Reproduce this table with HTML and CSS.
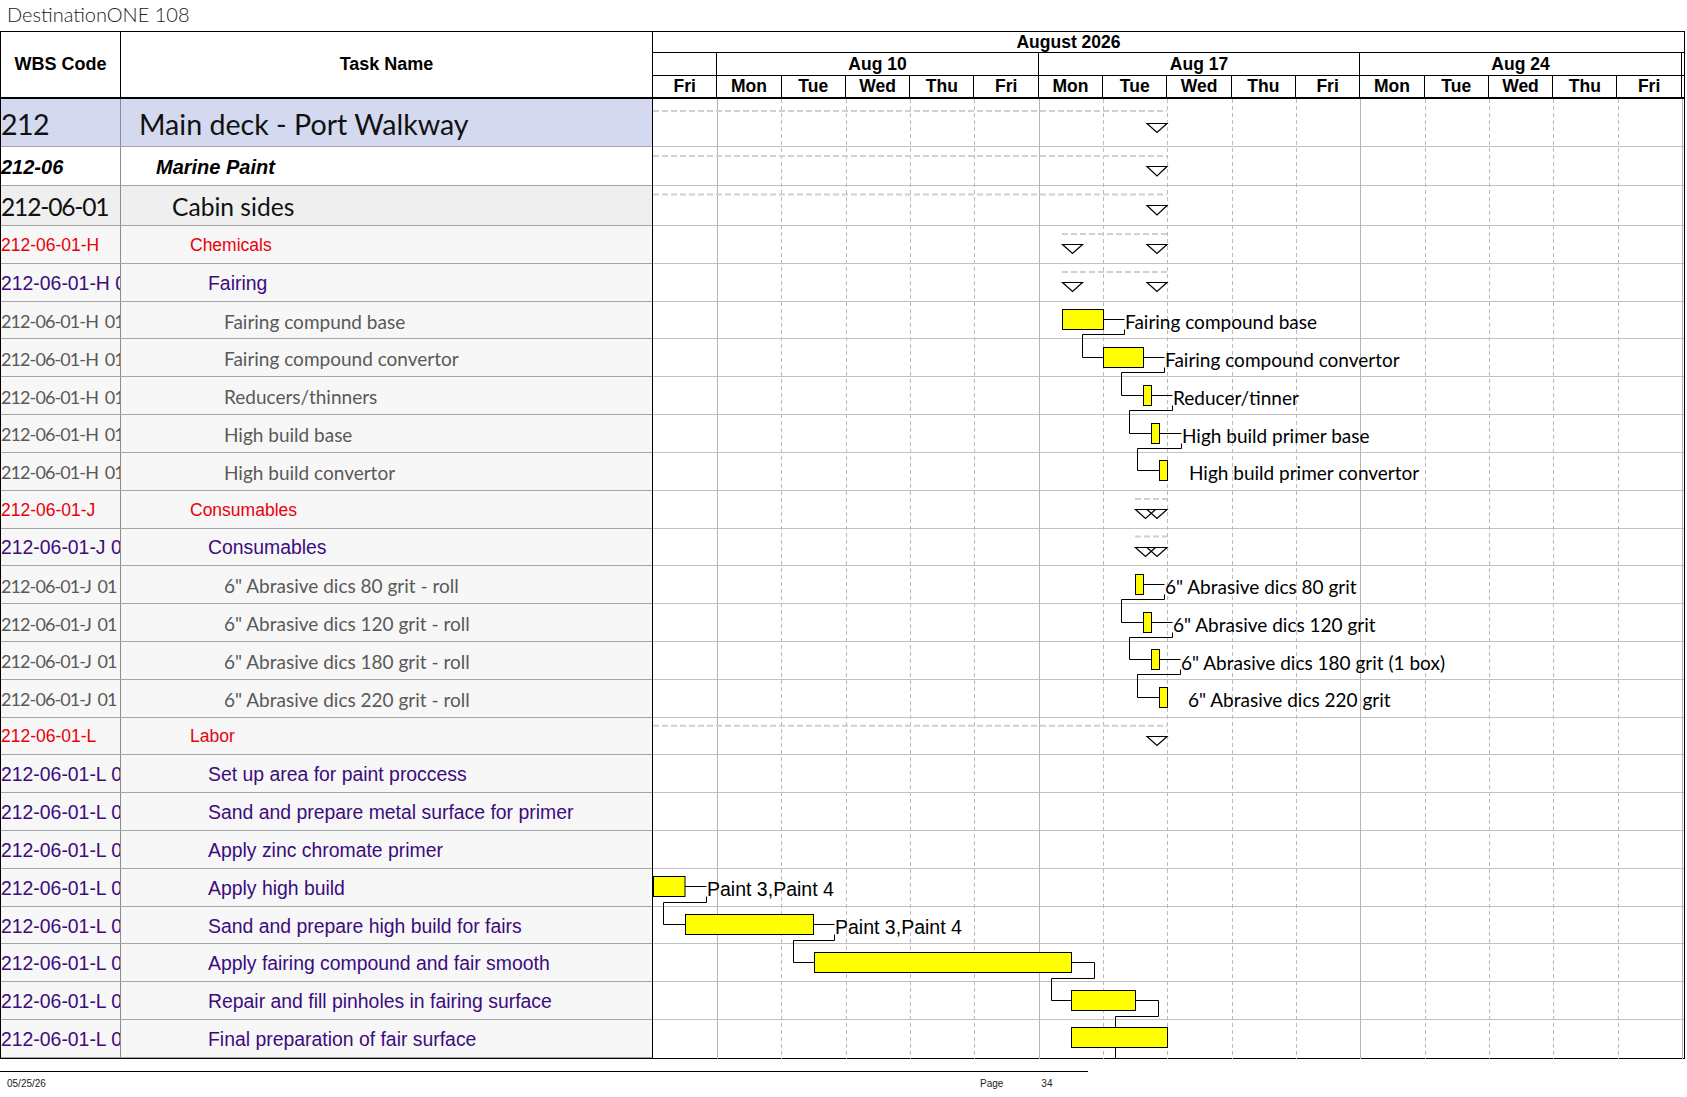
FILE: index.html
```html
<!DOCTYPE html>
<html lang="en">
<head>
<meta charset="utf-8">
<title>DestinationONE 108</title>
<link rel="stylesheet" href="styles.css">
</head>
<body>
<div class="page">
  <div class="doc-title">DestinationONE 108</div>
  <div class="chart">
    <div class="table">
      <div class="thead">
        <div class="th th-wbs">WBS Code</div>
        <div class="th th-task">Task Name</div>
      </div>
      <div class="row l1"><div class="wbs">212</div><div class="name">Main deck - Port Walkway</div></div>
      <div class="row l2"><div class="wbs">212-06</div><div class="name">Marine Paint</div></div>
      <div class="row l3"><div class="wbs">212-06-01</div><div class="name">Cabin sides</div></div>
      <div class="row l4"><div class="wbs">212-06-01-H</div><div class="name">Chemicals</div></div>
      <div class="row l5"><div class="wbs">212-06-01-H 01</div><div class="name">Fairing</div></div>
      <div class="row l6"><div class="wbs">212-06-01-H 0101</div><div class="name">Fairing compund base</div></div>
      <div class="row l6"><div class="wbs">212-06-01-H 0102</div><div class="name">Fairing compound convertor</div></div>
      <div class="row l6"><div class="wbs">212-06-01-H 0103</div><div class="name">Reducers/thinners</div></div>
      <div class="row l6"><div class="wbs">212-06-01-H 0104</div><div class="name">High build base</div></div>
      <div class="row l6"><div class="wbs">212-06-01-H 0105</div><div class="name">High build convertor</div></div>
      <div class="row l4"><div class="wbs">212-06-01-J</div><div class="name">Consumables</div></div>
      <div class="row l5"><div class="wbs">212-06-01-J 01</div><div class="name">Consumables</div></div>
      <div class="row l6"><div class="wbs">212-06-01-J 01 01</div><div class="name">6" Abrasive dics 80 grit - roll</div></div>
      <div class="row l6"><div class="wbs">212-06-01-J 01 02</div><div class="name">6" Abrasive dics 120 grit - roll</div></div>
      <div class="row l6"><div class="wbs">212-06-01-J 01 03</div><div class="name">6" Abrasive dics 180 grit - roll</div></div>
      <div class="row l6"><div class="wbs">212-06-01-J 01 04</div><div class="name">6" Abrasive dics 220 grit - roll</div></div>
      <div class="row l4"><div class="wbs">212-06-01-L</div><div class="name">Labor</div></div>
      <div class="row l5"><div class="wbs">212-06-01-L 01</div><div class="name">Set up area for paint proccess</div></div>
      <div class="row l5"><div class="wbs">212-06-01-L 02</div><div class="name">Sand and prepare metal surface for primer</div></div>
      <div class="row l5"><div class="wbs">212-06-01-L 03</div><div class="name">Apply zinc chromate primer</div></div>
      <div class="row l5"><div class="wbs">212-06-01-L 04</div><div class="name">Apply high build</div></div>
      <div class="row l5"><div class="wbs">212-06-01-L 05</div><div class="name">Sand and prepare high build for fairs</div></div>
      <div class="row l5"><div class="wbs">212-06-01-L 06</div><div class="name">Apply fairing compound and fair smooth</div></div>
      <div class="row l5"><div class="wbs">212-06-01-L 07</div><div class="name">Repair and fill pinholes in fairing surface</div></div>
      <div class="row l5"><div class="wbs">212-06-01-L 08</div><div class="name">Final preparation of fair surface</div></div>
    </div>

    <div class="gantt">
      <div class="ghead">
        <div class="gmonth">August 2026</div>
        <div class="gweeks">
          <div class="wk wk1"></div>
          <div class="wk wk5">Aug 10</div>
          <div class="wk wk5">Aug 17</div>
          <div class="wk wk5">Aug 24</div>
        </div>
        <div class="gdays">
          <div class="day">Fri</div>
          <div class="day">Mon</div><div class="day">Tue</div><div class="day">Wed</div><div class="day">Thu</div><div class="day">Fri</div>
          <div class="day">Mon</div><div class="day">Tue</div><div class="day">Wed</div><div class="day">Thu</div><div class="day">Fri</div>
          <div class="day">Mon</div><div class="day">Tue</div><div class="day">Wed</div><div class="day">Thu</div><div class="day">Fri</div>
        </div>
      </div>
      <div class="gbody">
        <div class="grow h1"></div>
        <div class="grow h2"></div>
        <div class="grow h3"></div>
        <div class="grow"></div><div class="grow"></div><div class="grow"></div><div class="grow"></div>
        <div class="grow"></div><div class="grow"></div><div class="grow"></div><div class="grow"></div>
        <div class="grow"></div><div class="grow"></div><div class="grow"></div><div class="grow"></div>
        <div class="grow"></div><div class="grow"></div><div class="grow"></div><div class="grow"></div>
        <div class="grow"></div><div class="grow"></div><div class="grow"></div><div class="grow"></div>
        <div class="grow"></div><div class="grow"></div>

        <svg class="gsvg" width="1031" height="960" viewBox="0 0 1031 960" xmlns="http://www.w3.org/2000/svg">
          <g class="vsolid">
            <line x1="64.5" y1="0" x2="64.5" y2="960"/>
            <line x1="386.5" y1="0" x2="386.5" y2="960"/>
            <line x1="707.5" y1="0" x2="707.5" y2="960"/>
            <line x1="1029.5" y1="0" x2="1029.5" y2="960"/>
          </g>
          <g class="vdash">
            <line x1="128.5" y1="0" x2="128.5" y2="960"/>
            <line x1="193.5" y1="0" x2="193.5" y2="960"/>
            <line x1="257.5" y1="0" x2="257.5" y2="960"/>
            <line x1="321.5" y1="0" x2="321.5" y2="960"/>
            <line x1="450.5" y1="0" x2="450.5" y2="960"/>
            <line x1="514.5" y1="0" x2="514.5" y2="960"/>
            <line x1="579.5" y1="0" x2="579.5" y2="960"/>
            <line x1="643.5" y1="0" x2="643.5" y2="960"/>
            <line x1="772.5" y1="0" x2="772.5" y2="960"/>
            <line x1="836.5" y1="0" x2="836.5" y2="960"/>
            <line x1="900.5" y1="0" x2="900.5" y2="960"/>
            <line x1="965.5" y1="0" x2="965.5" y2="960"/>
          </g>

          <g class="sumline">
            <line x1="0" y1="12" x2="514" y2="12"/>
            <line x1="0" y1="57" x2="514" y2="57"/>
            <line x1="0" y1="95.5" x2="514" y2="95.5"/>
            <line x1="409" y1="135" x2="514" y2="135"/>
            <line x1="409" y1="173" x2="514" y2="173"/>
            <line x1="482" y1="400" x2="514" y2="400"/>
            <line x1="482" y1="437.6" x2="514" y2="437.6"/>
            <line x1="0" y1="626.7" x2="514" y2="626.7"/>
          </g>

          <g class="tri">
            <polygon points="494,24.5 514,24.5 504,33.5"/>
            <polygon points="494,67.5 514,67.5 504,77"/>
            <polygon points="494,106.5 514,106.5 504,116"/>
            <polygon points="409.5,145.5 429.5,145.5 419.5,154.5"/>
            <polygon points="494,145.5 514,145.5 504,154.5"/>
            <polygon points="409.5,183.5 429.5,183.5 419.5,192.5"/>
            <polygon points="494,183.5 514,183.5 504,192.5"/>
            <polygon points="482.5,410.5 502.5,410.5 492.5,419.5"/>
            <polygon points="494,410.5 514,410.5 504,419.5"/>
            <polygon points="482.5,448.5 502.5,448.5 492.5,457.5"/>
            <polygon points="494,448.5 514,448.5 504,457.5"/>
            <polygon points="494,637.5 514,637.5 504,646.5"/>
          </g>

          <g class="link">
            <path d="M450.5,220.5 H471.5"/>
            <path d="M471.5,230.5 V235.5 H429.5 V258.5 H450.5"/>
            <path d="M490.5,258.5 H511.5"/>
            <path d="M511.5,268.5 V273.5 H468.5 V296.5 H490.5"/>
            <path d="M498.5,296.5 H519.5"/>
            <path d="M519.5,306.5 V311.5 H476.5 V334.5 H498.5"/>
            <path d="M506.5,334.5 H528.5"/>
            <path d="M528.5,344.5 V349.5 H484.5 V371.5 H506.5"/>
            <path d="M490.5,485.5 H511.5"/>
            <path d="M511.5,495.5 V500.5 H468.5 V523.5 H490.5"/>
            <path d="M498.5,523.5 H519.5"/>
            <path d="M519.5,533.5 V538.5 H476.5 V560.5 H498.5"/>
            <path d="M506.5,560.5 H527.5"/>
            <path d="M527.5,570.5 V575.5 H484.5 V598.5 H506.5"/>
            <path d="M32,787.5 H53.5"/>
            <path d="M53.5,797.5 V803.5 H10.5 V825.5 H32.5"/>
            <path d="M160.5,825.5 H181.5"/>
            <path d="M181.5,835.5 V841.5 H140.5 V863.5 H161.5"/>
            <path d="M418.5,863.5 H441.5 V879.5 H398.5 V901.5 H418.5"/>
            <path d="M482.5,901.5 H505.5 V917.5 H462.5 V928.5"/>
            <path d="M462.5,948.5 V960"/>
          </g>

          <g class="bar">
            <rect x="409.5" y="210.5" width="41" height="20"/>
            <rect x="450.5" y="248.5" width="40" height="20"/>
            <rect x="490.5" y="286.5" width="8" height="20"/>
            <rect x="498.5" y="324.5" width="8" height="20"/>
            <rect x="506.5" y="361.5" width="8" height="20"/>
            <rect x="482.5" y="475.5" width="8" height="20"/>
            <rect x="490.5" y="513.5" width="8" height="20"/>
            <rect x="498.5" y="550.5" width="8" height="20"/>
            <rect x="506.5" y="588.5" width="8" height="20"/>
            <rect x="0.5" y="777.5" width="31.5" height="20"/>
            <rect x="32.5" y="815.5" width="128" height="20"/>
            <rect x="161.5" y="853.5" width="257" height="20"/>
            <rect x="418.5" y="891.5" width="64" height="20"/>
            <rect x="418.5" y="928.5" width="96" height="20"/>
          </g>

          <g class="lbl">
            <text x="472" y="229.5">Fairing compound base</text>
            <text x="512" y="267.5">Fairing compound convertor</text>
            <text x="520" y="305.5">Reducer/tinner</text>
            <text x="529" y="343.5">High build primer base</text>
            <text x="536" y="380.5">High build primer convertor</text>
            <text x="512" y="494.5">6" Abrasive dics 80 grit</text>
            <text x="520" y="532.5">6" Abrasive dics 120 grit</text>
            <text x="528" y="570.5">6" Abrasive dics 180 grit (1 box)</text>
            <text x="535" y="607.5">6" Abrasive dics 220 grit</text>
          </g>
          <g class="lbl-res">
            <text x="54" y="796.5">Paint 3,Paint 4</text>
            <text x="182" y="834.5">Paint 3,Paint 4</text>
          </g>
        </svg>
      </div>
    </div>
  </div>

  <div class="foot-line"></div>
  <div class="foot">
    <span class="foot-date">05/25/26</span>
    <span class="foot-page">Page</span>
    <span class="foot-num">34</span>
  </div>
</div>
</body>
</html>
```

FILE: styles.css
```css
* {
  box-sizing: border-box;
}

body {
  margin: 0;
  background: #ffffff;
  font-family: "Liberation Sans", Arial, sans-serif;
  color: #000;
}

.page {
  width: 1687px;
}

.doc-title {
  height: 31px;
  padding-left: 7px;
  font-family: Lato, "Open Sans", sans-serif;
  font-weight: 300;
  font-size: 20px;
  line-height: 29px;
  color: #222;
}

.chart {
  display: flex;
  width: 1685px;
  border: 1px solid #000;
}

/* ---------- left table ---------- */
.table {
  width: 651px;
  flex: none;
}

.thead {
  display: flex;
  height: 67px;
  border-bottom: 2px solid #000;
}

.th {
  display: flex;
  align-items: center;
  justify-content: center;
  font-family: "Liberation Sans", Arial, sans-serif;
  font-weight: bold;
  font-size: 18px;
}

.th-wbs {
  width: 120px;
  border-right: 1px solid #000;
}

.th-task {
  flex: 1;
}

.row {
  display: flex;
  height: 37.82px;
  border-bottom: 1px solid #a4a4a4;
  background: #f7f7f7;
  white-space: nowrap;
}

.row .wbs {
  width: 120px;
  flex: none;
  display: flex;
  align-items: center;
  padding-top: 2px;
  overflow: hidden;
  border-right: 1px solid #8c8c8c;
}

.row .name {
  flex: 1;
  display: flex;
  align-items: center;
  padding-top: 2px;
  overflow: hidden;
}

.row.l1 {
  height: 48px;
  background: #d5d9f0;
  font-family: Lato, sans-serif;
  font-size: 28.6px;
  color: #111;
}
.row.l1 .wbs { letter-spacing: -0.6px; }
.row.l1 .name { padding-left: 18px; }

.row.l2 {
  height: 39px;
  background: #ffffff;
  font-family: "Liberation Sans", Arial, sans-serif;
  font-weight: bold;
  font-style: italic;
  font-size: 20px;
}
.row.l2 .name { padding-left: 35px; }

.row.l3 {
  height: 40px;
  background: #efefef;
  font-family: Lato, sans-serif;
  font-size: 24.6px;
  color: #111;
}
.row.l3 .wbs { letter-spacing: -1.2px; }
.row.l3 .name { padding-left: 51px; }

.row.l4 {
  font-family: "Liberation Sans", Arial, sans-serif;
  font-size: 17.5px;
  color: #e8000b;
}
.row.l4 .name { padding-left: 69px; }

.row.l5 {
  font-family: "Liberation Sans", Arial, sans-serif;
  font-size: 19.4px;
  color: #3c0c7e;
}
.row.l5 .name { padding-left: 87px; }

.row.l6 {
  font-family: Lato, sans-serif;
  font-size: 19px;
  color: #595959;
}
.row.l6 .wbs {
  font-size: 18px;
  letter-spacing: -0.9px;
  word-spacing: 3px;
}
.row.l6 .name { padding-left: 103px; }

/* ---------- gantt ---------- */
.gantt {
  width: 1032px;
  flex: none;
  border-left: 1px solid #000;
}

.ghead {
  height: 67px;
  border-bottom: 2px solid #000;
  font-family: "Liberation Sans", Arial, sans-serif;
  font-weight: bold;
  font-size: 17.5px;
}

.gmonth {
  height: 21px;
  border-bottom: 1px solid #000;
  line-height: 20px;
  text-align: center;
  padding-right: 200px;
}

.gweeks,
.gdays {
  display: grid;
  grid-template-columns: repeat(16, 64.3px) 1fr;
}

.gweeks {
  height: 23px;
  border-bottom: 1px solid #000;
}

.gdays {
  height: 21px;
}

.wk,
.day {
  display: flex;
  align-items: center;
  justify-content: center;
  border-right: 1px solid #000;
}

.wk1 { grid-column: span 1; }
.wk5 { grid-column: span 5; }

.gbody {
  position: relative;
}

.grow {
  height: 37.82px;
  border-bottom: 1px solid #c2c2c2;
}
.grow.h1 { height: 48px; }
.grow.h2 { height: 39px; }
.grow.h3 { height: 40px; }
.grow:last-of-type { border-bottom: none; }

.gsvg {
  position: absolute;
  left: 0;
  top: 0;
  overflow: hidden;
}

.vsolid line {
  stroke: #b4b4b4;
  stroke-width: 1;
}

.vdash line {
  stroke: #bcbcbc;
  stroke-width: 1;
  stroke-dasharray: 4 3;
}

.sumline line {
  stroke: #d0d0d0;
  stroke-width: 2;
  stroke-dasharray: 6 3;
}

.tri polygon {
  fill: none;
  stroke: #000;
  stroke-width: 1.2;
}

.link path {
  fill: none;
  stroke: #000;
  stroke-width: 1;
}

.bar rect {
  fill: #ffff00;
  stroke: #000;
  stroke-width: 1;
}

.lbl text {
  font-family: Lato, sans-serif;
  font-size: 19px;
  fill: #000;
}

.lbl-res text {
  font-family: "Liberation Sans", Arial, sans-serif;
  font-size: 19.5px;
  fill: #000;
}

/* ---------- footer ---------- */
.foot-line {
  width: 1088px;
  height: 1px;
  margin-top: 12px;
  background: #000;
}

.foot {
  display: flex;
  align-items: center;
  height: 24px;
  padding-left: 7px;
  font-family: "Liberation Sans", Arial, sans-serif;
  font-size: 10px;
  color: #222;
}

.foot-date {
  width: 973px;
}

.foot-num {
  margin-left: 38px;
}
```
